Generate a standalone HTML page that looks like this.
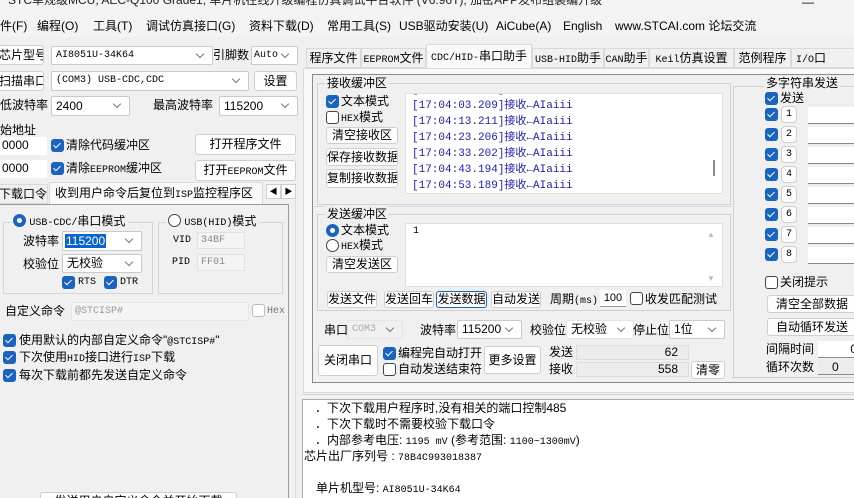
<!DOCTYPE html>
<html><head><meta charset="utf-8"><style>
*{margin:0;padding:0;box-sizing:border-box}
html,body{width:854px;height:498px;overflow:hidden}
body{background:#f0f0f0;position:relative;font-family:"Liberation Sans","Noto Sans CJK SC",sans-serif;font-size:12px;color:#000}
.a{position:absolute;white-space:nowrap;line-height:16px}
.b{position:absolute;background:#fdfdfd;border:1px solid #cfcfcf;border-radius:3px;text-align:center;white-space:nowrap;overflow:hidden}
.c{position:absolute;background:#fff;border:1px solid #c9c9c9;border-radius:2px;padding-left:4px;white-space:nowrap}
.c::after{content:"";position:absolute;right:9px;top:4px;width:5px;height:5px;border-right:1px solid #777;border-bottom:1px solid #777;transform:rotate(45deg)}
.i{position:absolute;background:#fff;border:1px solid #d6d6d6;padding-left:3px;white-space:nowrap}
.k{position:absolute;width:13px;height:13px;background:#1a63be;border-radius:3px}
.k::after{content:"";position:absolute;left:4px;top:2px;width:3px;height:6px;border-right:1.5px solid #fff;border-bottom:1.5px solid #fff;transform:rotate(45deg)}
.u{position:absolute;width:13px;height:13px;background:#fff;border:1px solid #444;border-radius:3px}
.r{position:absolute;width:13px;height:13px;border-radius:50%;background:#1a63be}
.r::after{content:"";position:absolute;left:4px;top:4px;width:5px;height:5px;border-radius:50%;background:#fff}
.ru{position:absolute;width:13px;height:13px;border-radius:50%;border:1px solid #444;background:#fff}
.g{position:absolute;border:1px solid #d5d5d5}
.s{font-family:"Liberation Mono","Noto Sans CJK SC",monospace;font-size:10px}
.blue{color:#1d1db8;font-size:11px}
</style></head><body>
<div class="a" style="left:0;top:0;width:854px;height:15px;background:#f3f3f3"></div>
<div class="a" style="left:8px;top:-8px;font-size:12px;color:#222">STC单规级MCU, AEC-Q100 Grade1, 单片机在线升级编程仿真调试平台软件 (V6.96T), 加密APP发布组装编升级</div>
<div class="a" style="left:802px;top:-6px;font-size:12px">—</div>
<div class="a" style="left:0;top:15px;width:854px;height:22px;background:#f3f3f3"></div>
<div class="a" style="top:17px;left:0;line-height:18px">件(F)</div>
<div class="a" style="top:17px;left:37px;line-height:18px">编程(O)</div>
<div class="a" style="top:17px;left:93px;line-height:18px">工具(T)</div>
<div class="a" style="top:17px;left:146px;line-height:18px">调试仿真接口(G)</div>
<div class="a" style="top:17px;left:249px;line-height:18px">资料下载(D)</div>
<div class="a" style="top:17px;left:327px;line-height:18px">常用工具(S)</div>
<div class="a" style="top:17px;left:399px;line-height:18px">USB驱动安装(U)</div>
<div class="a" style="top:17px;left:496px;line-height:18px">AiCube(A)</div>
<div class="a" style="top:17px;left:563px;line-height:18px">English</div>
<div class="a" style="top:17px;left:615px;line-height:18px">www.STCAI.com 论坛交流</div>

<div class="b" style="left:-2px;top:45px;width:46px;height:20px;line-height:18px">芯片型号</div>
<div class="c s" style="left:51px;top:46px;width:162px;height:19px;line-height:17px">AI8051U-34K64</div>
<div class="a" style="left:213px;top:47px">引脚数</div>
<div class="c s" style="left:251px;top:46px;width:47px;height:19px;line-height:17px;padding-left:2px">Auto</div>
<div class="b" style="left:-2px;top:71px;width:46px;height:20px;line-height:18px">扫描串口</div>
<div class="c s" style="left:51px;top:71px;width:198px;height:20px;line-height:18px">(COM3) USB-CDC,CDC</div>
<div class="b" style="left:254px;top:71px;width:43px;height:20px;line-height:18px">设置</div>
<div class="a" style="left:0;top:97px">低波特率</div>
<div class="c" style="left:51px;top:96px;width:79px;height:20px;line-height:18px">2400</div>
<div class="a" style="left:153px;top:97px">最高波特率</div>
<div class="c" style="left:219px;top:96px;width:79px;height:20px;line-height:18px">115200</div>
<div class="a" style="left:0;top:122px">始地址</div>
<div class="i" style="left:-1px;top:137px;width:48px;height:18px;line-height:16px;border:none">0000</div>
<div class="k" style="left:51px;top:139px"></div>
<div class="a" style="left:66px;top:137px">清除代码缓冲区</div>
<div class="b" style="left:195px;top:134px;width:101px;height:21px;line-height:19px">打开程序文件</div>
<div class="i" style="left:-1px;top:160px;width:48px;height:18px;line-height:16px;border:none">0000</div>
<div class="k" style="left:51px;top:162px"></div>
<div class="a" style="left:66px;top:160px">清除<span class="s">EEPROM</span>缓冲区</div>
<div class="b" style="left:195px;top:160px;width:101px;height:21px;line-height:19px">打开<span class="s">EEPROM</span>文件</div>
<div class="a" style="left:-2px;top:184px;width:50px;height:20px;border:1px solid #d9d9d9;background:#f0f0f0;line-height:18px;text-align:center">下载口令</div>
<div class="a" style="left:49px;top:182px;width:214px;height:22px;background:#f9f9f9;border:1px solid #d9d9d9;border-bottom:none;line-height:20px;padding-left:5px">收到用户命令后复位到<span class="s">ISP</span>监控程序区</div>
<div class="b" style="left:266px;top:184px;width:15px;height:15px;font-size:8px;line-height:13px;border-radius:0">◀</div>
<div class="b" style="left:281px;top:184px;width:15px;height:15px;font-size:8px;line-height:13px;border-radius:0">▶</div>
<div class="a" style="left:-1px;top:204px;width:290px;height:300px;border:1px solid #999;background:#f0f0f0"></div>
<div class="g" style="left:3px;top:222px;width:150px;height:72px"></div>
<div class="a" style="left:11px;top:213px;background:#f0f0f0;padding:0 3px 0 2px"><span class="r" style="position:relative;display:inline-block;vertical-align:-2px"></span> <span class="s">USB-CDC/</span>串口模式</div>
<div class="a" style="left:23px;top:233px">波特率</div>
<div class="c" style="left:62px;top:231px;width:80px;height:20px;line-height:18px;padding-left:2px"><span style="background:#0a64d0;color:#fff;padding:0 1px">115200</span></div>
<div class="a" style="left:23px;top:256px">校验位</div>
<div class="c" style="left:62px;top:254px;width:80px;height:19px;line-height:17px">无校验</div>
<div class="k" style="left:62px;top:276px"></div><div class="a s" style="left:78px;top:275px">RTS</div>
<div class="k" style="left:104px;top:276px"></div><div class="a s" style="left:120px;top:275px">DTR</div>
<div class="g" style="left:158px;top:222px;width:125px;height:72px"></div>
<div class="a" style="left:166px;top:213px;background:#f0f0f0;padding:0 3px 0 2px"><span class="ru" style="position:relative;display:inline-block;vertical-align:-2px"></span> <span class="s">USB(HID)</span>模式</div>
<div class="a s" style="left:173px;top:233px">VID</div>
<div class="i s" style="left:197px;top:232px;width:48px;height:17px;line-height:15px;color:#888;background:#f4f4f4;border-color:#e2e2e2">34BF</div>
<div class="a s" style="left:172px;top:255px">PID</div>
<div class="i s" style="left:197px;top:254px;width:48px;height:17px;line-height:15px;color:#888;background:#f4f4f4;border-color:#e2e2e2">FF01</div>
<div class="a" style="left:5px;top:303px">自定义命令</div>
<div class="i s" style="left:71px;top:302px;width:178px;height:19px;line-height:17px;color:#999;background:#f4f4f4;border-color:#e6e6e6">@STCISP#</div>
<div class="u" style="left:252px;top:304px;border-color:#bbb"></div>
<div class="a s" style="left:267px;top:304px;color:#777">Hex</div>
<div class="k" style="left:3px;top:334px"></div><div class="a" style="left:19px;top:332px">使用默认的内部自定义命令"<span class="s">@STCISP#</span>"</div>
<div class="k" style="left:3px;top:351px"></div><div class="a" style="left:19px;top:349px">下次使用<span class="s">HID</span>接口进行<span class="s">ISP</span>下载</div>
<div class="k" style="left:3px;top:369px"></div><div class="a" style="left:19px;top:367px">每次下载前都先发送自定义命令</div>
<div class="b" style="left:40px;top:492px;width:197px;height:20px;line-height:16px">发送用户自定义命令并开始下载</div>
<div class="a" style="left:295px;top:200px;width:1px;height:298px;background:#dcdcdc"></div>

<div class="a" style="left:306px;top:48px;width:55px;height:20px;border:1px solid #d9d9d9;line-height:18px;text-align:center">程序文件</div>
<div class="a" style="left:361px;top:48px;width:65px;height:20px;border:1px solid #d9d9d9;line-height:18px;text-align:center"><span class="s">EEPROM</span>文件</div>
<div class="a" style="left:426px;top:44px;width:106px;height:25px;background:#f9f9f9;border:1px solid #d9d9d9;border-bottom:none;line-height:22px;text-align:center"><span class="s">CDC/HID-</span>串口助手</div>
<div class="a" style="left:532px;top:48px;width:72px;height:20px;border:1px solid #d9d9d9;line-height:18px;text-align:center"><span class="s">USB-HID</span>助手</div>
<div class="a" style="left:604px;top:48px;width:45px;height:20px;border:1px solid #d9d9d9;line-height:18px;text-align:center"><span class="s">CAN</span>助手</div>
<div class="a" style="left:649px;top:48px;width:85px;height:20px;border:1px solid #d9d9d9;line-height:18px;text-align:center"><span class="s">Keil</span>仿真设置</div>
<div class="a" style="left:734px;top:48px;width:57px;height:20px;border:1px solid #d9d9d9;line-height:18px;text-align:center">范例程序</div>
<div class="a" style="left:791px;top:48px;width:70px;height:20px;border:1px solid #d9d9d9;line-height:18px;padding-left:4px"><span class="s">I/O</span>口</div>
<div class="a" style="left:303px;top:68px;width:560px;height:325px;background:#f9f9f9;border:1px solid #d9d9d9"></div>
<div class="a" style="left:312px;top:74px;width:550px;height:309px;border:1px solid #8a8a8a;background:#f0f0f0"></div>

<div class="g" style="left:317px;top:83px;width:414px;height:122px;border-color:#d0d0d0"></div>
<div class="a" style="left:325px;top:75px;background:#f0f0f0;padding:0 2px">接收缓冲区</div>
<div class="k" style="left:326px;top:95px"></div><div class="a" style="left:341px;top:93px">文本模式</div>
<div class="u" style="left:326px;top:111px"></div><div class="a" style="left:341px;top:109px"><span class="s">HEX</span>模式</div>
<div class="b" style="left:326px;top:127px;width:72px;height:17px;line-height:15px">清空接收区</div>
<div class="b" style="left:326px;top:148px;width:72px;height:18px;line-height:16px">保存接收数据</div>
<div class="b" style="left:326px;top:169px;width:72px;height:19px;line-height:17px">复制接收数据</div>
<div class="a" style="left:405px;top:93px;width:318px;height:101px;background:#fff;border:1px solid #e0e0e0;overflow:hidden"></div>
<div class="a" style="left:406px;top:94px;width:316px;height:99px;overflow:hidden">
<div class="a s blue" style="left:6px;top:-12px">[17:04:53.189]接收←AIaiii</div>
<div class="a s blue" style="left:6px;top:4px">[17:04:03.209]接收←AIaiii</div>
<div class="a s blue" style="left:6px;top:20px">[17:04:13.211]接收←AIaiii</div>
<div class="a s blue" style="left:6px;top:36px">[17:04:23.206]接收←AIaiii</div>
<div class="a s blue" style="left:6px;top:52px">[17:04:33.202]接收←AIaiii</div>
<div class="a s blue" style="left:6px;top:68px">[17:04:43.194]接收←AIaiii</div>
<div class="a s blue" style="left:6px;top:84px">[17:04:53.189]接收←AIaiii</div>
</div>
<div class="a" style="left:713px;top:160px;width:2px;height:16px;background:#888"></div>
<div class="a" style="left:313px;top:206px;width:419px;height:1px;background:#c6dbe9"></div>

<div class="g" style="left:317px;top:214px;width:414px;height:97px;border-color:#d0d0d0"></div>
<div class="a" style="left:325px;top:206px;background:#f0f0f0;padding:0 2px">发送缓冲区</div>
<div class="r" style="left:326px;top:224px"></div><div class="a" style="left:341px;top:222px">文本模式</div>
<div class="ru" style="left:326px;top:239px"></div><div class="a" style="left:341px;top:237px"><span class="s">HEX</span>模式</div>
<div class="b" style="left:326px;top:256px;width:72px;height:17px;line-height:15px">清空发送区</div>
<div class="a" style="left:405px;top:223px;width:318px;height:64px;background:#fff;border:1px solid #e0e0e0"></div>
<div class="a s" style="left:413px;top:224px">1</div>
<div class="a" style="left:707px;top:227px;color:#bbb;font-size:8px">▲</div>
<div class="a" style="left:707px;top:271px;color:#bbb;font-size:8px">▼</div>
<div class="b" style="left:327px;top:291px;width:50px;height:17px;line-height:15px">发送文件</div>
<div class="b" style="left:384px;top:291px;width:50px;height:17px;line-height:15px">发送回车</div>
<div class="b" style="left:436px;top:291px;width:51px;height:17px;line-height:15px;border-color:#1a63be">发送数据</div>
<div class="b" style="left:491px;top:291px;width:50px;height:17px;line-height:15px">自动发送</div>
<div class="a" style="left:550px;top:291px">周期<span class="s">(ms)</span></div>
<div class="a" style="left:600px;top:290px;width:26px;height:17px;background:#fff;border-bottom:1px solid #999;text-align:center;font-size:11px">100</div>
<div class="u" style="left:630px;top:292px"></div><div class="a" style="left:645px;top:291px">收发匹配测试</div>

<div class="a" style="left:324px;top:322px">串口</div>
<div class="c s" style="left:347px;top:320px;width:56px;height:19px;line-height:17px;color:#aaa;background:#f0f0f0;border-color:#e4e4e4">COM3</div>
<div class="a" style="left:420px;top:322px">波特率</div>
<div class="c" style="left:457px;top:320px;width:65px;height:19px;line-height:17px">115200</div>
<div class="a" style="left:530px;top:322px">校验位</div>
<div class="c" style="left:566px;top:320px;width:68px;height:19px;line-height:17px;border-color:#e2e2e2">无校验</div>
<div class="a" style="left:633px;top:322px">停止位</div>
<div class="c" style="left:669px;top:320px;width:56px;height:19px;line-height:17px">1位</div>
<div class="b" style="left:318px;top:345px;width:60px;height:31px;line-height:29px">关闭串口</div>
<div class="k" style="left:383px;top:347px"></div><div class="a" style="left:398px;top:345px">编程完自动打开</div>
<div class="u" style="left:383px;top:363px"></div><div class="a" style="left:398px;top:361px">自动发送结束符</div>
<div class="b" style="left:484px;top:346px;width:57px;height:28px;line-height:26px">更多设置</div>
<div class="a" style="left:549px;top:344px">发送</div>
<div class="a" style="left:576px;top:345px;width:113px;height:15px;background:#ececec;border:1px solid #ddd;text-align:right;padding-right:10px;line-height:13px">62</div>
<div class="a" style="left:549px;top:361px">接收</div>
<div class="a" style="left:576px;top:362px;width:113px;height:15px;background:#ececec;border:1px solid #ddd;text-align:right;padding-right:10px;line-height:13px">558</div>
<div class="b" style="left:691px;top:361px;width:34px;height:18px;line-height:16px">清零</div>

<div class="g" style="left:733px;top:86px;width:130px;height:292px;border-color:#d0d0d0"></div>
<div class="a" style="left:764px;top:75px;background:#f0f0f0;padding:0 2px">多字符串发送</div>
<div class="k" style="left:765px;top:92px"></div><div class="a" style="left:780px;top:90px">发送</div>
<div class="k" style="left:765px;top:108px"></div><div class="b s" style="left:781px;top:106px;width:16px;height:17px;line-height:15px;border-radius:4px">1</div><div class="a" style="left:808px;top:107px;width:50px;height:17px;background:#fff;border-bottom:1px solid #888"></div>
<div class="k" style="left:765px;top:128px"></div><div class="b s" style="left:781px;top:126px;width:16px;height:17px;line-height:15px;border-radius:4px">2</div><div class="a" style="left:808px;top:127px;width:50px;height:17px;background:#fff;border-bottom:1px solid #888"></div>
<div class="k" style="left:765px;top:148px"></div><div class="b s" style="left:781px;top:146px;width:16px;height:17px;line-height:15px;border-radius:4px">3</div><div class="a" style="left:808px;top:147px;width:50px;height:17px;background:#fff;border-bottom:1px solid #888"></div>
<div class="k" style="left:765px;top:168px"></div><div class="b s" style="left:781px;top:166px;width:16px;height:17px;line-height:15px;border-radius:4px">4</div><div class="a" style="left:808px;top:167px;width:50px;height:17px;background:#fff;border-bottom:1px solid #888"></div>
<div class="k" style="left:765px;top:188px"></div><div class="b s" style="left:781px;top:186px;width:16px;height:17px;line-height:15px;border-radius:4px">5</div><div class="a" style="left:808px;top:187px;width:50px;height:17px;background:#fff;border-bottom:1px solid #888"></div>
<div class="k" style="left:765px;top:208px"></div><div class="b s" style="left:781px;top:206px;width:16px;height:17px;line-height:15px;border-radius:4px">6</div><div class="a" style="left:808px;top:207px;width:50px;height:17px;background:#fff;border-bottom:1px solid #888"></div>
<div class="k" style="left:765px;top:228px"></div><div class="b s" style="left:781px;top:226px;width:16px;height:17px;line-height:15px;border-radius:4px">7</div><div class="a" style="left:808px;top:227px;width:50px;height:17px;background:#fff;border-bottom:1px solid #888"></div>
<div class="k" style="left:765px;top:248px"></div><div class="b s" style="left:781px;top:246px;width:16px;height:17px;line-height:15px;border-radius:4px">8</div><div class="a" style="left:808px;top:247px;width:50px;height:17px;background:#fff;border-bottom:1px solid #888"></div>
<div class="u" style="left:765px;top:276px"></div><div class="a" style="left:780px;top:274px">关闭提示</div>
<div class="b" style="left:767px;top:295px;width:90px;height:18px;line-height:16px">清空全部数据</div>
<div class="b" style="left:767px;top:318px;width:90px;height:18px;line-height:16px">自动循环发送</div>
<div class="a" style="left:766px;top:341px">间隔时间</div>
<div class="a" style="left:818px;top:341px;width:40px;height:17px;background:#fff;border-bottom:1px solid #888;text-align:right;padding-right:1px">0</div>
<div class="a" style="left:766px;top:359px">循环次数</div>
<div class="a" style="left:818px;top:359px;width:40px;height:16px;background:#ececec;border-bottom:1px solid #888;padding-left:14px">0</div>

<div class="a" style="left:302px;top:394px;width:552px;height:1px;background:#c6dbe9"></div>
<div class="a" style="left:302px;top:399px;width:552px;height:99px;background:#fff;border:1px solid #aaa;border-right:none;border-bottom:none"></div>
<div class="a" style="left:315px;top:400px">．下次下载用户程序时,没有相关的端口控制485</div>
<div class="a" style="left:315px;top:416px">．下次下载时不需要校验下载口令</div>
<div class="a" style="left:315px;top:432px">．内部参考电压: <span class="s">1195 mV</span> (参考范围: <span class="s">1100~1300mV</span>)</div>
<div class="a" style="left:304px;top:448px">芯片出厂序列号 : <span class="s">78B4C993018387</span></div>
<div class="a" style="left:316px;top:480px">单片机型号: <span class="s">AI8051U-34K64</span></div>
</body></html>
